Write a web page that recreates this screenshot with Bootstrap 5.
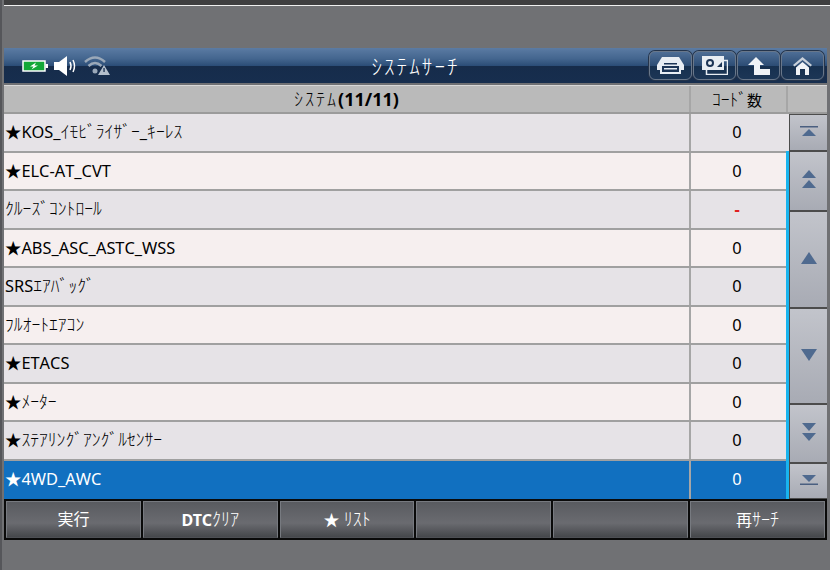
<!DOCTYPE html>
<html lang="ja">
<head>
    <meta charset="UTF-8">
    <meta name="viewport" content="width=device-width, initial-scale=1.0">
    <title>システムサーチ</title>
    <link href="https://cdn.jsdelivr.net/npm/bootstrap@5.3.2/dist/css/bootstrap.min.css" rel="stylesheet">

    <style>
        html, body {
            height: 570px;
            overflow: hidden;
        }

        body {
            background: #707174;
            border-left: 2px solid #55565a;
            font-family: "Noto Sans", "Noto Sans CJK JP", sans-serif;
            color: #000;
            font-kerning: none;
        }

        .topStrip {
            height: 6px;
            background: #3f3f40;
            border-bottom: 1px solid #f0f0f0;
            margin-left: 2px;
        }

        .screenArea {
            margin-top: 42px;
            margin-left: 2px;
            margin-right: 3px;
        }

        .titleBar {
            height: 35px;
            background: linear-gradient(#5b7ba3 0, #44668f 30%, #2c4e78 50%, #162c4b 52%, #172e4e 100%);
            color: #fff;
            position: relative;
        }

        .titleText {
            position: absolute;
            left: 0;
            right: 0;
            top: 5px;
            text-align: center;
            font-size: 21px;
            letter-spacing: 2.1px;
            line-height: 26px;
            font-weight: 300;
        }

        .statusIcons {
            padding-left: 18px;
            gap: 5px;
        }

        .toolBtn {
            width: 43px;
            height: 29px;
            border: 1px solid #69778a;
            border-radius: 6px;
            background: linear-gradient(#4e6e96 0, #2d4d75 50%, #17304f 52%, #1c3656 100%);
            padding: 0;
            box-shadow: 0 0 0 1px #24344b;
        }

        .toolGroup {
            gap: 1px;
            padding-right: 3px;
            position: relative;
        }

        .headRow {
            height: 29px;
            margin-top: 2px;
            background: #bababa;
            border-top: 1px solid #d8d8d8;
            border-bottom: 2px solid #9b9b9b;
            font-size: 18px;
            line-height: 26px;
        }

        .headKana {
            font-size: 18px;
            letter-spacing: 2px;
            font-weight: 300;
        }

        .headSmall {
            font-size: 15px;
        }

        .kana {
            font-size: 17.6px;
            font-weight: 300;
            letter-spacing: 0;
        }

        .colCode {
            width: 97px;
            flex: none;
            text-align: center;
            border-left: 2px solid #a6a6a6;
            padding-right: 3px;
        }

        .colScroll {
            width: 41px;
            flex: none;
            border-left: 2px solid #a6a6a6;
        }

        .dataRow {
            height: 38.5px;
            border-bottom: 2px solid #a0a0a0;
            font-size: 16.4px;
            line-height: 35px;
            background: #f6efef;
            white-space: nowrap;
        }

        .dataRow:nth-child(odd) {
            background: #e6e3e7;
        }

        .dataRow.chosen {
            background: #1170c0;
            color: #fff;
            border-bottom: 0;
        }

        .rowName {
            padding-left: 1px;
            overflow: hidden;
        }

        .noCode {
            color: #e02020;
            font-weight: 700;
        }

        .scrollCol {
            width: 41px;
            flex: none;
            display: flex;
            flex-direction: column;
            position: relative;
            background: #e6e3e7;
            padding-left: 3px;
        }

        .blueLine {
            position: absolute;
            left: 0;
            top: 37px;
            bottom: 0;
            width: 3px;
            background: #19b4ee;
        }

        .scrollBtn {
            display: flex;
            align-items: center;
            justify-content: center;
            background: linear-gradient(#c2c4cb, #a8abb4);
            border: 1px solid #4c4c4c;
            border-right: 0;
            border-radius: 0;
            padding: 0 0 3px;
        }

        .actionBar {
            height: 41px;
            background: #0a0a0a;
            padding: 2px;
            gap: 2px;
        }

        .actionBtn {
            flex: 1 1 0;
            border: 1px solid #777a80;
            border-bottom-color: #4d4f54;
            border-radius: 0;
            background: linear-gradient(#595b60, #6a6b70 60%, #45474b);
            color: #fff;
            font-size: 16px;
            line-height: 1;
            padding: 0 0 2px;
        }

        .actionBtn .kana {
            font-size: 18px;
        }
    </style>
</head>
<body>
    <div class="topStrip"></div>
    <div class="screenArea">
        <div class="titleBar d-flex align-items-center justify-content-between">
            <div class="titleText">ｼｽﾃﾑｻｰﾁ</div>
            <div class="statusIcons d-flex align-items-center">
                <svg width="27" height="12" viewBox="0 0 27 12"><rect x="1" y="1" width="22" height="10" fill="#12a838" stroke="#fff" stroke-width="1.5"/><rect x="23.5" y="4" width="2.5" height="4" fill="#fff"/><path d="M14 2.5 L8 6.5 H11.5 L9.5 9.5 L16 5.5 H12.5 Z" fill="#fff"/></svg>
                <svg width="25" height="20" viewBox="0 0 25 20"><path d="M0 6 H5 L13 0 V20 L5 14 H0 Z" fill="#fff"/><path d="M16 6 Q18 10 16 14 M19 4 Q22 10 19 16" fill="none" stroke="#fff" stroke-width="1.5"/></svg>
                <svg width="26" height="20" viewBox="0 0 26 20"><path d="M1 6 Q11 -3 21 6 M4.5 10 Q11 4 17.5 10" fill="none" stroke="#9aa8b8" stroke-width="2.5"/><circle cx="11" cy="15" r="2.5" fill="#9aa8b8"/><path d="M20 9 L26 19 H14 Z" fill="#b4bfcc"/><rect x="19.4" y="12" width="1.3" height="4" fill="#1a3050"/></svg>
            </div>
            <div class="toolGroup d-flex align-items-center">
                <button type="button" class="toolBtn btn d-flex align-items-center justify-content-center">
                    <svg width="27" height="17" viewBox="0 0 27 17"><path d="M5 0 H22 L27 8 V13 H24 V17 H3 V13 H0 V8 Z" fill="#e8edf3"/><rect x="7" y="6" width="13" height="1.5" fill="#1d3556"/><rect x="5" y="9" width="17" height="6" fill="#1d3556"/><rect x="7" y="11" width="13" height="1.5" fill="#e8edf3"/></svg>
                </button>
                <button type="button" class="toolBtn btn d-flex align-items-center justify-content-center">
                    <svg width="26" height="19" viewBox="0 0 26 19"><rect x="4.5" y="4.5" width="21" height="14" fill="none" stroke="#e8edf3" stroke-width="1.5"/><rect x="0" y="0" width="22" height="14" fill="#e8edf3"/><circle cx="8" cy="7" r="4" fill="#1d3556"/><circle cx="8" cy="7" r="2" fill="#e8edf3"/><path d="M15 11 L20 6 V11 Z" fill="#1d3556"/></svg>
                </button>
                <button type="button" class="toolBtn btn d-flex align-items-center justify-content-center">
                    <svg width="23" height="18" viewBox="0 0 23 18"><path d="M9 0 L17 8 H13 V12 H23 V18 H7 V8 H1 Z" fill="#f0f3f7"/></svg>
                </button>
                <button type="button" class="toolBtn btn d-flex align-items-center justify-content-center">
                    <svg width="19" height="18" viewBox="0 0 19 18"><path d="M9.5 0 L19 8 L17.5 9.5 L9.5 3 L1.5 9.5 L0 8 Z" fill="#c8d0da"/><path d="M9.5 5 L16 10.5 V18 H12 V12 H7 V18 H3 V10.5 Z" fill="#f0f3f7"/></svg>
                </button>
            </div>
        </div>

        <div class="headRow d-flex">
            <div class="flex-grow-1 text-center"><span class="headKana">ｼｽﾃﾑ</span><b>(11/11)</b></div>
            <div class="colCode"><span class="kana">ｺｰﾄﾞ</span><span class="headSmall">数</span></div>
            <div class="colScroll"></div>
        </div>

        <div class="d-flex">
            <div class="flex-grow-1">
                <div class="dataRow d-flex"><div class="rowName flex-grow-1">★KOS_<span class="kana">ｲﾓﾋﾞﾗｲｻﾞｰ</span>_<span class="kana">ｷｰﾚｽ</span></div><div class="colCode">0</div></div>
                <div class="dataRow d-flex"><div class="rowName flex-grow-1">★ELC-AT_CVT</div><div class="colCode">0</div></div>
                <div class="dataRow d-flex"><div class="rowName flex-grow-1"><span class="kana">ｸﾙｰｽﾞｺﾝﾄﾛｰﾙ</span></div><div class="colCode noCode">-</div></div>
                <div class="dataRow d-flex"><div class="rowName flex-grow-1">★ABS_ASC_ASTC_WSS</div><div class="colCode">0</div></div>
                <div class="dataRow d-flex"><div class="rowName flex-grow-1">SRS<span class="kana">ｴｱﾊﾞｯｸﾞ</span></div><div class="colCode">0</div></div>
                <div class="dataRow d-flex"><div class="rowName flex-grow-1"><span class="kana">ﾌﾙｵｰﾄｴｱｺﾝ</span></div><div class="colCode">0</div></div>
                <div class="dataRow d-flex"><div class="rowName flex-grow-1">★ETACS</div><div class="colCode">0</div></div>
                <div class="dataRow d-flex"><div class="rowName flex-grow-1">★<span class="kana">ﾒｰﾀｰ</span></div><div class="colCode">0</div></div>
                <div class="dataRow d-flex"><div class="rowName flex-grow-1">★<span class="kana">ｽﾃｱﾘﾝｸﾞｱﾝｸﾞﾙｾﾝｻｰ</span></div><div class="colCode">0</div></div>
                <div class="dataRow chosen d-flex"><div class="rowName flex-grow-1">★4WD_AWC</div><div class="colCode">0</div></div>
            </div>
            <div class="scrollCol">
                <div class="blueLine"></div>
                <button type="button" class="scrollBtn btn" style="height:37px"><svg width="18" height="11" viewBox="0 0 18 11"><rect width="18" height="1.5" fill="#4a5f80"/><path d="M9 3 L16 10 H2 Z" fill="#4f6a8f"/></svg></button>
                <button type="button" class="scrollBtn btn" style="height:60px"><svg width="16" height="19" viewBox="0 0 16 19"><path d="M8 0 L15 8 H1 Z M8 10 L15 18 H1 Z" fill="#4f6a8f"/></svg></button>
                <button type="button" class="scrollBtn btn" style="height:97px"><svg width="16" height="12" viewBox="0 0 16 12"><path d="M8 0 L16 12 H0 Z" fill="#4f6a8f"/></svg></button>
                <button type="button" class="scrollBtn btn" style="height:96px"><svg width="16" height="12" viewBox="0 0 16 12"><path d="M8 12 L16 0 H0 Z" fill="#4f6a8f"/></svg></button>
                <button type="button" class="scrollBtn btn" style="height:59px"><svg width="16" height="19" viewBox="0 0 16 19"><path d="M8 8 L15 0 H1 Z M8 18 L15 10 H1 Z" fill="#4f6a8f"/></svg></button>
                <button type="button" class="scrollBtn btn" style="height:36px"><svg width="18" height="11" viewBox="0 0 18 11"><path d="M9 8 L16 1 H2 Z" fill="#4f6a8f"/><rect y="9.5" width="18" height="1.5" fill="#4a5f80"/></svg></button>
            </div>
        </div>

        <div class="actionBar d-flex">
            <button type="button" class="actionBtn btn">実行</button>
            <button type="button" class="actionBtn btn"><b>DTC</b><span class="kana">ｸﾘｱ</span></button>
            <button type="button" class="actionBtn btn">★ <span class="kana">ﾘｽﾄ</span></button>
            <button type="button" class="actionBtn btn"></button>
            <button type="button" class="actionBtn btn"></button>
            <button type="button" class="actionBtn btn">再<span class="kana">ｻｰﾁ</span></button>
        </div>
    </div>
</body>
</html>
